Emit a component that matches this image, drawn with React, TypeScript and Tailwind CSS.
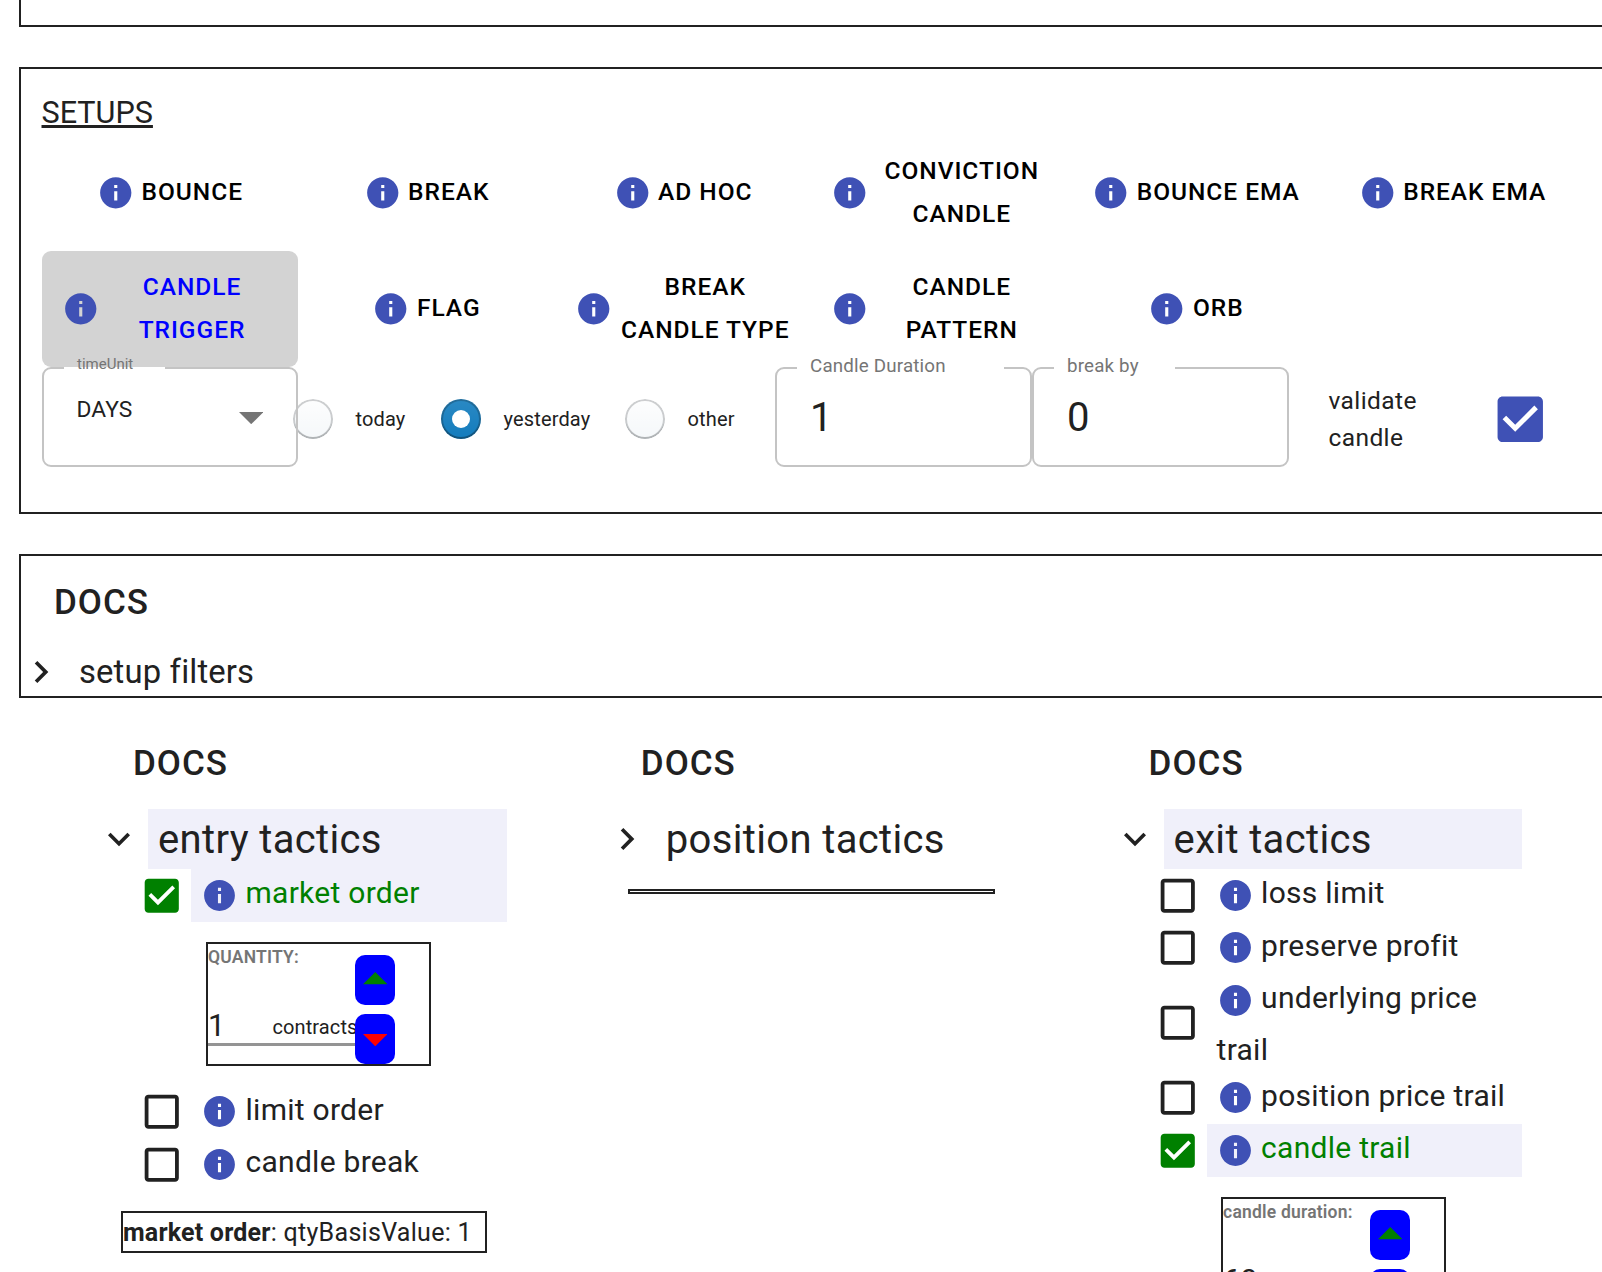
import React from "react";

const setups = [
  "BOUNCE",
  "BREAK",
  "AD HOC",
  "CONVICTION CANDLE",
  "BOUNCE EMA",
  "BREAK EMA",
  "CANDLE TRIGGER",
  "FLAG",
  "BREAK CANDLE TYPE",
  "CANDLE PATTERN",
  "ORB",
];

function InfoIcon({ className }: { className: string }) {
  return (
    <svg viewBox="0 0 24 24" className={`shrink-0 fill-[#3f51b5] ${className}`}>
      <path d="M12 2C6.48 2 2 6.48 2 12s4.48 10 10 10 10-4.48 10-10S17.52 2 12 2zm1 15h-2v-6h2v6zm0-8h-2V7h2v2z" />
    </svg>
  );
}

function CheckIcon({ checked, className }: { checked: boolean; className: string }) {
  return (
    <svg viewBox="0 0 24 24" className={className}>
      {checked ? (
        <path d="M19 3H5c-1.11 0-2 .9-2 2v14c0 1.1.89 2 2 2h14c1.11 0 2-.9 2-2V5c0-1.1-.89-2-2-2zm-9 14l-5-5 1.41-1.41L10 14.17l7.59-7.59L19 8l-9 9z" />
      ) : (
        <path d="M19 5v14H5V5h14m0-2H5c-1.1 0-2 .9-2 2v14c0 1.1.9 2 2 2h14c1.1 0 2-.9 2-2V5c0-1.1-.9-2-2-2z" />
      )}
    </svg>
  );
}

function Chevron({ open }: { open: boolean }) {
  return (
    <svg viewBox="0 0 24 24" className="size-[44px] shrink-0 fill-[#212121]">
      {open ? (
        <path d="M16.59 8.59L12 13.17 7.41 8.59 6 10l6 6 6-6z" />
      ) : (
        <path d="M10 6L8.59 7.41 13.17 12l-4.58 4.59L10 18l6-6z" />
      )}
    </svg>
  );
}

function Docs({ className }: { className: string }) {
  return (
    <div className={`text-[35px] leading-[61px] font-medium tracking-[1px] ${className}`}>DOCS</div>
  );
}

function SetupButton({ label }: { label: string }) {
  const selected = label === "CANDLE TRIGGER";
  return (
    <button
      className={
        selected
          ? "flex h-[116px] w-[256px] items-center justify-center gap-[7px] rounded-[9px] bg-[#d3d3d3] px-5 pb-px text-[#0000ff]"
          : "flex h-[116px] items-center justify-center gap-[7px] px-5 pb-px text-black"
      }
    >
      <InfoIcon className="-ml-[0.5px] size-[37.5px]" />
      <span className="text-center text-[24.5px] leading-[42.9px] font-medium tracking-[0.97px]">{label}</span>
    </button>
  );
}

function OutlinedField({ label, className, labelClass, notchClass, children }: {
  label: string;
  className: string;
  labelClass: string;
  notchClass: string;
  children: React.ReactNode;
}) {
  return (
    <div className={`relative h-[100px] shrink-0 rounded-[9px] border-2 border-[#c4c4c4] pl-[33px] ${className}`}>
      <div className={`absolute -top-0.5 left-[20px] h-0.5 bg-white ${notchClass}`} />
      <div className={`absolute left-[33px] text-[#757575] ${labelClass}`}>{label}</div>
      {children}
    </div>
  );
}

function Radio({ label, checked, className }: { label: string; checked?: boolean; className: string }) {
  return (
    <label className={`flex items-center gap-[22.5px] text-[20px] leading-[30px] tracking-[0.15px] ${className}`}>
      {checked ? (
        <span className="flex size-10 shrink-0 items-center justify-center rounded-full bg-[#137cbd] bg-linear-to-b from-white/10 to-white/0 shadow-[inset_0_0_0_2px_rgba(16,22,26,0.25),inset_0_-2px_0_rgba(16,22,26,0.2)]">
          <span className="size-[17.5px] rounded-full bg-white" />
        </span>
      ) : (
        <span className="size-10 shrink-0 rounded-full bg-[#f5f8fa] bg-linear-to-b from-white/80 to-white/0 shadow-[inset_0_0_0_2px_rgba(16,22,26,0.2),inset_0_-2px_0_rgba(16,22,26,0.12)]" />
      )}
      {label}
    </label>
  );
}

function TacticsHeader({ label, open }: { label: string; open: boolean }) {
  return (
    <div className="mt-[15px] flex h-[60px] items-center">
      <Chevron open={open} />
      <div
        className={
          open
            ? "ml-[7px] h-[60px] flex-1 bg-[#f0f0fa] pl-2.5 text-[40px] leading-[62px] tracking-[0.35px]"
            : "ml-[7px] h-[60px] flex-1 pl-2.5 text-[40px] leading-[62px] tracking-[0.35px]"
        }
      >
        {label}
      </div>
    </div>
  );
}

function Tactic({ label, checked = false }: { label: string; checked?: boolean }) {
  return (
    <div className="flex items-center">
      <div className="flex w-[94px] shrink-0 justify-end pr-[6.2px]">
        <CheckIcon
          checked={checked}
          className={checked ? "size-[45.5px] fill-[#008000]" : "size-[45.5px] fill-[#212121]"}
        />
      </div>
      <div
        className={
          checked
            ? "flex-1 bg-[#f0f0fa] pl-2.5 text-[30px] leading-[45px] tracking-[0.27px] text-[#008000]"
            : "flex-1 pl-2.5 text-[30px] leading-[45px] tracking-[0.27px]"
        }
      >
        <span className="mr-[7.5px] inline-flex h-[52.5px] items-center align-[-11px]">
          <InfoIcon className="size-[37px]" />
        </span>
        {label}
      </div>
    </div>
  );
}

function Stepper({ title, value, unit }: { title: string; value: string; unit: string }) {
  return (
    <div className="my-5 ml-[109px] flex h-[124px] w-[225px] border-2 border-[#212121]">
      <div className="w-[147px] shrink-0">
        <div className="h-[69px] pt-[2px] text-[17.5px] leading-[22px] font-semibold tracking-[0.2px] whitespace-nowrap text-[#757575]">
          {title}
        </div>
        <div className="flex h-[33px] items-baseline border-b-[3px] border-[#949494] leading-[24px]">
          <span className="w-[64.5px] shrink-0 text-[30.5px] leading-[26px]">{value}</span>
          <span className="relative -top-[2px] text-[20px] tracking-[0.1px]">{unit}</span>
        </div>
      </div>
      <div className="relative flex flex-col gap-[9px] pt-[11px]">
        <button className="flex h-[50px] w-10 items-center justify-center rounded-[10px] bg-[#0000ff] pb-[2px]">
          <svg viewBox="0 0 10 5" className="h-[12.3px] w-[24.5px] fill-[#008000]">
            <path d="M0 5L5 0l5 5z" />
          </svg>
        </button>
        <button className="flex h-[50px] w-10 items-center justify-center rounded-[10px] bg-[#0000ff] pt-[3px]">
          <svg viewBox="0 0 10 5" className="h-[12.3px] w-[24.5px] fill-[#ff0000]">
            <path d="M0 0l5 5 5-5z" />
          </svg>
        </button>
      </div>
    </div>
  );
}

export default function App() {
  return (
    <div className="h-[1272px] w-[1602px] overflow-hidden bg-white pl-[19px] font-[Roboto,sans-serif] text-[#212121]">
      <section className="h-[27px] w-[1640px] border-2 border-t-0 border-[#212121]" />

      <section className="mt-10 h-[447px] w-[1640px] border-2 border-[#212121] pt-[21px] pl-[21px]">
        <h2 className="-ml-[0.5px] text-[30.6px] leading-[45px] underline decoration-[3px] underline-offset-[2px]">SETUPS</h2>
        <div className="grid grid-cols-[repeat(6,256.5px)]">
          {setups.map((label) => (
            <SetupButton key={label} label={label} />
          ))}
        </div>
        <div className="flex">
          <OutlinedField
            label="timeUnit"
            className="w-[256px]"
            notchClass="w-[101px]"
            labelClass="-top-[17px] text-[15px] leading-[24px]"
          >
            <div className="flex justify-between pt-[24px] pr-[33px]">
              <span className="-ml-[0.5px] text-[22.75px] leading-[34px] tracking-[0.1px]">DAYS</span>
              <svg viewBox="0 0 10 5" className="mt-[19px] h-[12.2px] w-[24.4px] fill-[#757575]">
                <path d="M0 0l5 5 5-5z" />
              </svg>
            </div>
          </OutlinedField>
          <div className="-ml-[5px] flex h-[104px] w-[482px] shrink-0">
            <Radio label="today" className="w-[148px]" />
            <Radio label="yesterday" checked className="w-[184px]" />
            <Radio label="other" className="w-[148px]" />
          </div>
          <OutlinedField
            label="Candle Duration"
            className="w-[257px]"
            notchClass="w-[207px]"
            labelClass="-top-[16px] text-[18.75px] leading-[26px] tracking-[0.18px]"
          >
            <div className="pt-[21px] text-[40px] leading-[56px]">1</div>
          </OutlinedField>
          <OutlinedField
            label="break by"
            className="w-[257px]"
            notchClass="w-[121px]"
            labelClass="-top-[16px] text-[18.75px] leading-[26px] tracking-[0.18px]"
          >
            <div className="pt-[21px] text-[40px] leading-[56px]">0</div>
          </OutlinedField>
          <label className="ml-[39.5px] flex h-[104px] items-center">
            <span className="w-[161px] text-[24.5px] leading-[37px] tracking-[0.4px]">
              validate
              <br />
              candle
            </span>
            <CheckIcon checked className="size-[60.5px] fill-[#3f51b5]" />
          </label>
        </div>
      </section>

      <section className="mt-10 h-[144px] w-[1640px] border-2 border-[#212121] pt-[16px]">
        <Docs className="pl-[33px]" />
        <div className="mt-[15px] -ml-[2.5px] flex h-12 items-center">
          <Chevron open={false} />
          <span className="ml-[16.5px] text-[32.8px] leading-[48px] tracking-[0.15px]">setup filters</span>
        </div>
      </section>

      <div className="ml-[78px] grid grid-cols-[repeat(3,507.8px)] pt-[35px]">
        <div className="w-[410px]">
          <Docs className="pl-[36px]" />
          <TacticsHeader label="entry tactics" open />
          <Tactic label="market order" checked />
          <Stepper title="QUANTITY:" value="1" unit="contracts" />
          <Tactic label="limit order" />
          <Tactic label="candle break" />
          <div className="mt-5 ml-6 h-[42px] w-[366px] border-2 border-[#212121] text-[25px] leading-[40px] tracking-[0.3px]">
            <b className="tracking-[0.2px]">market order</b>: qtyBasisValue: 1
          </div>
        </div>
        <div className="w-[410px]">
          <Docs className="pl-[36px]" />
          <TacticsHeader label="position tactics" open={false} />
          <div className="mt-5 ml-[23.2px] h-[5px] w-[367px] border-2 border-[#212121]" />
        </div>
        <div className="w-[409.4px]">
          <Docs className="pl-[36px]" />
          <TacticsHeader label="exit tactics" open />
          <Tactic label="loss limit" />
          <Tactic label="preserve profit" />
          <Tactic label="underlying price trail" />
          <Tactic label="position price trail" />
          <Tactic label="candle trail" checked />
          <div className="-ml-[0.5px]">
            <Stepper title="candle duration:" value="60" unit="" />
          </div>
        </div>
      </div>
    </div>
  );
}
